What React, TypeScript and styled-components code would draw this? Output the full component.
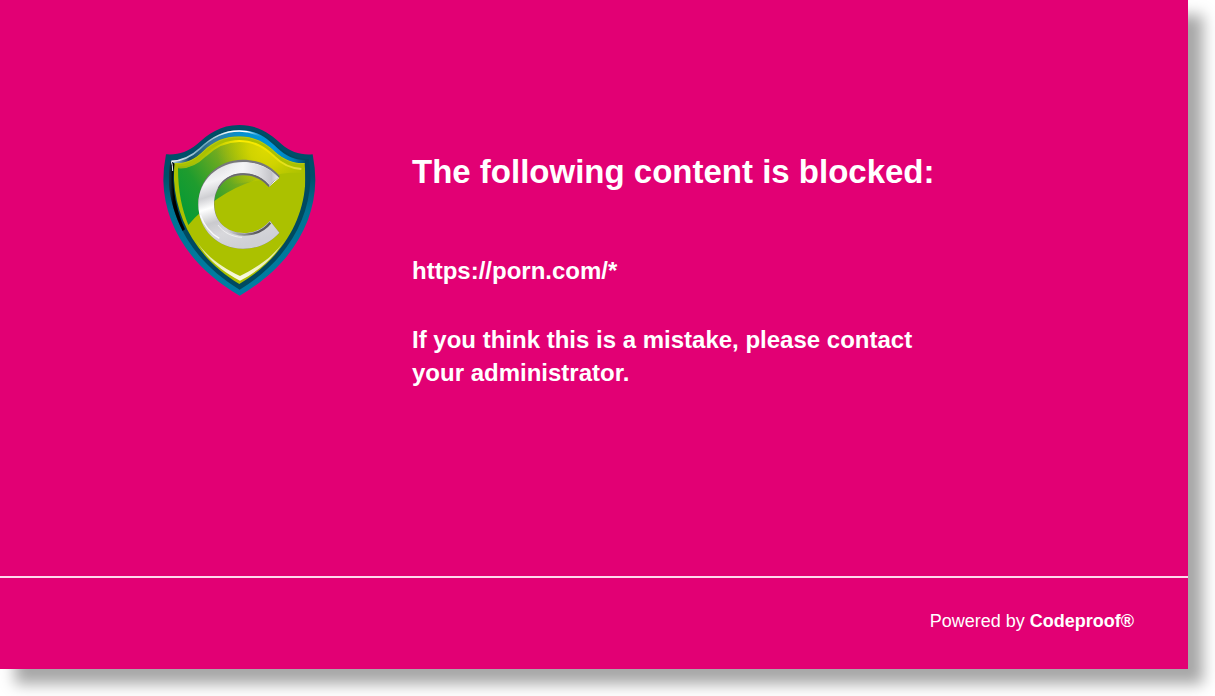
import React from "react";
import styled, { createGlobalStyle } from "styled-components";

const GlobalStyle = createGlobalStyle`
  *, *::before, *::after { box-sizing: border-box; }
  body {
    margin: 0;
    background: #fff;
    color: #fff;
    font-family: "Liberation Sans", Arial, sans-serif;
  }
`;

const Page = styled.div`
  min-height: 100vh;
  display: flex;
  padding: 0 27px 27px 0;
  overflow: hidden;
`;

const Panel = styled.div`
  flex: 1;
  display: flex;
  flex-direction: column;
  background: #e20074;
  box-shadow: 15px 15px 14px rgba(0, 0, 0, 0.35);
`;

const Content = styled.main`
  flex: 1;
  display: flex;
  align-items: flex-start;
  gap: 94px;
  padding: 123px 160px 48px 162px;
`;

const Logo = styled.svg`
  flex: none;
  width: 156px;
  height: 174px;
`;

const Message = styled.div`
  flex: 1;
  max-width: 540px;
  padding-top: 29px;
`;

const Title = styled.h1`
  margin: 0 0 62px;
  font-size: 33px;
  line-height: 40px;
`;

const Text = styled.p`
  margin: 0 0 36px;
  font-size: 24px;
  font-weight: 700;
  line-height: 33px;
`;

const Footer = styled.footer`
  padding: 32px 54px 36px;
  border-top: 2px solid #ffd9ec;
  font-size: 18px;
  line-height: 23px;
  text-align: right;
`;

function ShieldLogo() {
  return (
    <Logo viewBox="36 24 468 522" role="img" aria-label="Codeproof shield">
      <defs>
        <linearGradient id="rim" x1="0" y1="0" x2="0" y2="1">
          <stop offset="0" stopColor="#004c66" />
          <stop offset="0.3" stopColor="#00506b" />
          <stop offset="0.5" stopColor="#007293" />
          <stop offset="1" stopColor="#007ea3" />
        </linearGradient>
        <linearGradient id="band" x1="70" y1="0" x2="470" y2="0" gradientUnits="userSpaceOnUse">
          <stop offset="0" stopColor="#9fc4d2" />
          <stop offset="0.12" stopColor="#12516b" />
          <stop offset="0.28" stopColor="#37799a" />
          <stop offset="0.5" stopColor="#0590d0" />
          <stop offset="0.75" stopColor="#0098dc" />
          <stop offset="0.9" stopColor="#007fb4" />
          <stop offset="1" stopColor="#004a62" />
        </linearGradient>
        <linearGradient id="streak" x1="60" y1="0" x2="82" y2="0" gradientUnits="userSpaceOnUse">
          <stop offset="0" stopColor="#14303c" />
          <stop offset="0.5" stopColor="#000000" />
          <stop offset="1" stopColor="#000000" />
        </linearGradient>
        <linearGradient id="gloss" x1="100" y1="300" x2="330" y2="150" gradientUnits="userSpaceOnUse">
          <stop offset="0" stopColor="#079a35" />
          <stop offset="0.3" stopColor="#1f9c2e" />
          <stop offset="0.75" stopColor="#80ae1c" />
          <stop offset="1" stopColor="#abc100" />
        </linearGradient>
        <radialGradient id="sun" cx="350" cy="100" r="150" gradientUnits="userSpaceOnUse">
          <stop offset="0" stopColor="#dfdb00" />
          <stop offset="0.35" stopColor="#d7d600" stopOpacity="0.85" />
          <stop offset="0.7" stopColor="#c4cd00" stopOpacity="0.4" />
          <stop offset="1" stopColor="#b4c500" stopOpacity="0" />
        </radialGradient>
        <linearGradient id="edge" x1="80" y1="0" x2="460" y2="0" gradientUnits="userSpaceOnUse">
          <stop offset="0" stopColor="#8fb413" />
          <stop offset="0.3" stopColor="#bccb00" />
          <stop offset="0.5" stopColor="#ffed00" />
          <stop offset="0.75" stopColor="#ece200" />
          <stop offset="1" stopColor="#dede4a" />
        </linearGradient>
        <linearGradient id="silver" x1="170" y1="150" x2="250" y2="400" gradientUnits="userSpaceOnUse">
          <stop offset="0" stopColor="#dcdcdf" />
          <stop offset="0.2" stopColor="#f3f3f5" />
          <stop offset="0.35" stopColor="#cfcfd3" />
          <stop offset="0.48" stopColor="#ffffff" />
          <stop offset="0.65" stopColor="#cacace" />
          <stop offset="0.8" stopColor="#d8d8dc" />
          <stop offset="1" stopColor="#cfd0d5" />
        </linearGradient>
        <linearGradient id="silverTop" x1="220" y1="0" x2="390" y2="0" gradientUnits="userSpaceOnUse">
          <stop offset="0" stopColor="#f6f6f8" stopOpacity="0" />
          <stop offset="0.35" stopColor="#f4f4f6" />
          <stop offset="0.65" stopColor="#dcdce0" />
          <stop offset="0.85" stopColor="#c4c4c9" />
          <stop offset="1" stopColor="#f2f2f4" />
        </linearGradient>
        <linearGradient id="groove" x1="228" y1="0" x2="320" y2="0" gradientUnits="userSpaceOnUse">
          <stop offset="0" stopColor="#5a5b60" stopOpacity="0" />
          <stop offset="1" stopColor="#5a5b60" />
        </linearGradient>
        <linearGradient id="shine" x1="62" y1="0" x2="340" y2="0" gradientUnits="userSpaceOnUse">
          <stop offset="0" stopColor="#ffffff" />
          <stop offset="0.2" stopColor="#a9cad8" />
          <stop offset="0.35" stopColor="#69a5bc" />
          <stop offset="0.65" stopColor="#ffffff" />
          <stop offset="0.82" stopColor="#ffffff" />
          <stop offset="1" stopColor="#1b9bd8" stopOpacity="0" />
        </linearGradient>
        <linearGradient id="tip" x1="0" y1="380" x2="0" y2="495" gradientUnits="userSpaceOnUse">
          <stop offset="0" stopColor="#d9e18c" />
          <stop offset="1" stopColor="#fbfbe6" />
        </linearGradient>
        <clipPath id="face">
          <path d="M268 64C315 64 348 84 375 110C402 134 432 146 464 144Q466 170 466 195C463 318 392 434 268 507C145 434 79 318 72 195Q71 170 74 144C108 146 134 134 160 108C190 80 222 64 268 64Z" />
        </clipPath>
      </defs>
      <path
        fill="url(#rim)"
        d="M268 30C330 30 365 60 395 88C422 112 454 121 488 118Q496 160 496 196C494 340 407 462 269 542C130 462 43 340 40 196Q40 160 48 118C86 120 112 112 141 88C174 58 210 30 268 30Z"
      />
      <path
        fill="#004a60"
        d="M268 42C324 42 357 67 386 96C412 120 443 134 476 132Q481 164 481 196C476 328 397 446 269 524C140 446 62 328 57 196Q56 164 62 136C96 135 122 122 148 98C180 66 214 42 268 42Z"
      />
      <path
        fill="url(#band)"
        d="M64 139C98 138 124 125 150 101C181 70 217 45 268 45C320 45 352 70 382 99C408 123 436 136 466 135L464 148C430 148 400 136 374 112C346 86 316 66 268 66C222 66 190 82 161 110C134 136 108 148 74 146Z"
      />
      <path
        fill="url(#streak)"
        d="M61 138Q55 176 57 210C61 258 77 306 98 348L105 343C84 298 72 245 70 200Q69 168 74 146Z"
      />
      <path
        fill="none"
        stroke="url(#shine)"
        strokeWidth="5"
        d="M64 139C98 138 124 125 150 101C181 70 217 48 268 48C296 48 318 55 340 67"
      />
      <path fill="none" stroke="#dfeaf0" strokeWidth="3" d="M64 140Q68 148 68 168" />
      <g clipPath="url(#face)">
        <path fill="#abc100" d="M60 50H480V520H60Z" />
        <path
          fill="url(#gloss)"
          d="M84 158C112 160 138 150 166 122C196 94 226 76 268 76C314 76 344 98 372 122C396 144 424 156 454 158L454 166C300 180 190 242 115 330C96 282 84 230 84 158Z"
        />
        <path
          fill="url(#sun)"
          d="M166 122C196 94 226 76 268 76C314 76 344 98 372 122C396 144 424 156 454 158L454 174C410 171 370 178 330 196L166 220Z"
        />
        <path
          fill="none"
          stroke="url(#edge)"
          strokeWidth="6"
          d="M84 157C116 160 140 148 166 122C196 94 226 78 268 78C314 78 344 98 372 124C396 148 424 160 454 162"
        />
        <path
          fill="none"
          stroke="#b8ca16"
          strokeWidth="3"
          d="M74 146C108 148 134 135 160 110C190 82 222 66 268 66C315 66 348 86 375 112C402 136 432 148 464 146"
        />
      </g>
      <path fill="url(#tip)" d="M138 376C166 421 214 457 270 483C324 457 374 421 403 376C374 427 326 468 270 497C213 468 166 427 138 376Z" />
      <path
        fill="#77777b"
        d="M389 183C360 149 321 134 278 134C200 134 145 194 145 268C145 343 202 401 279 401C324 401 360 384 388 353L360 318C337 344 312 354 281 355C230 355 193 319 193 268C193 216 230 181 279 181C310 181 336 192 357 216L389 185Z"
      />
      <path
        fill="url(#silver)"
        d="M385 187C357 155 319 141 279 141C205 141 145 195 145 269C145 343 203 401 279 401C324 401 360 384 388 353L360 318C337 344 312 354 281 354C230 354 192 319 192 268C192 213 230 175 279 175C310 175 335 185 358 209Z"
      />
      <path fill="url(#silverTop)" d="M208 162C265 130 340 138 385 187L358 209C328 174 280 163 232 186Z" />
      <path fill="none" stroke="#68686c" strokeWidth="4" d="M205 220C228 169 310 158 357 214" />
      <path fill="none" stroke="url(#groove)" strokeWidth="7" d="M228 342C270 370 330 362 361 323" />
      <path fill="none" stroke="#ffffff" strokeWidth="4" d="M151 300C161 329 179 354 208 370" opacity="0.85" />
      <path fill="none" stroke="#ffffff" strokeWidth="3" d="M204 330C220 352 246 366 276 367" opacity="0.6" />
      <path fill="none" stroke="#ffffff" strokeWidth="3" d="M358 213L387 188" />
    </Logo>
  );
}

export default function App() {
  return (
    <>
      <GlobalStyle />
      <Page>
        <Panel>
          <Content>
            <ShieldLogo />
            <Message>
              <Title>The following content is blocked:</Title>
              <Text>https://porn.com/*</Text>
              <Text>If you think this is a mistake, please contact your administrator.</Text>
            </Message>
          </Content>
          <Footer>
            Powered by <strong>Codeproof®</strong>
          </Footer>
        </Panel>
      </Page>
    </>
  );
}
